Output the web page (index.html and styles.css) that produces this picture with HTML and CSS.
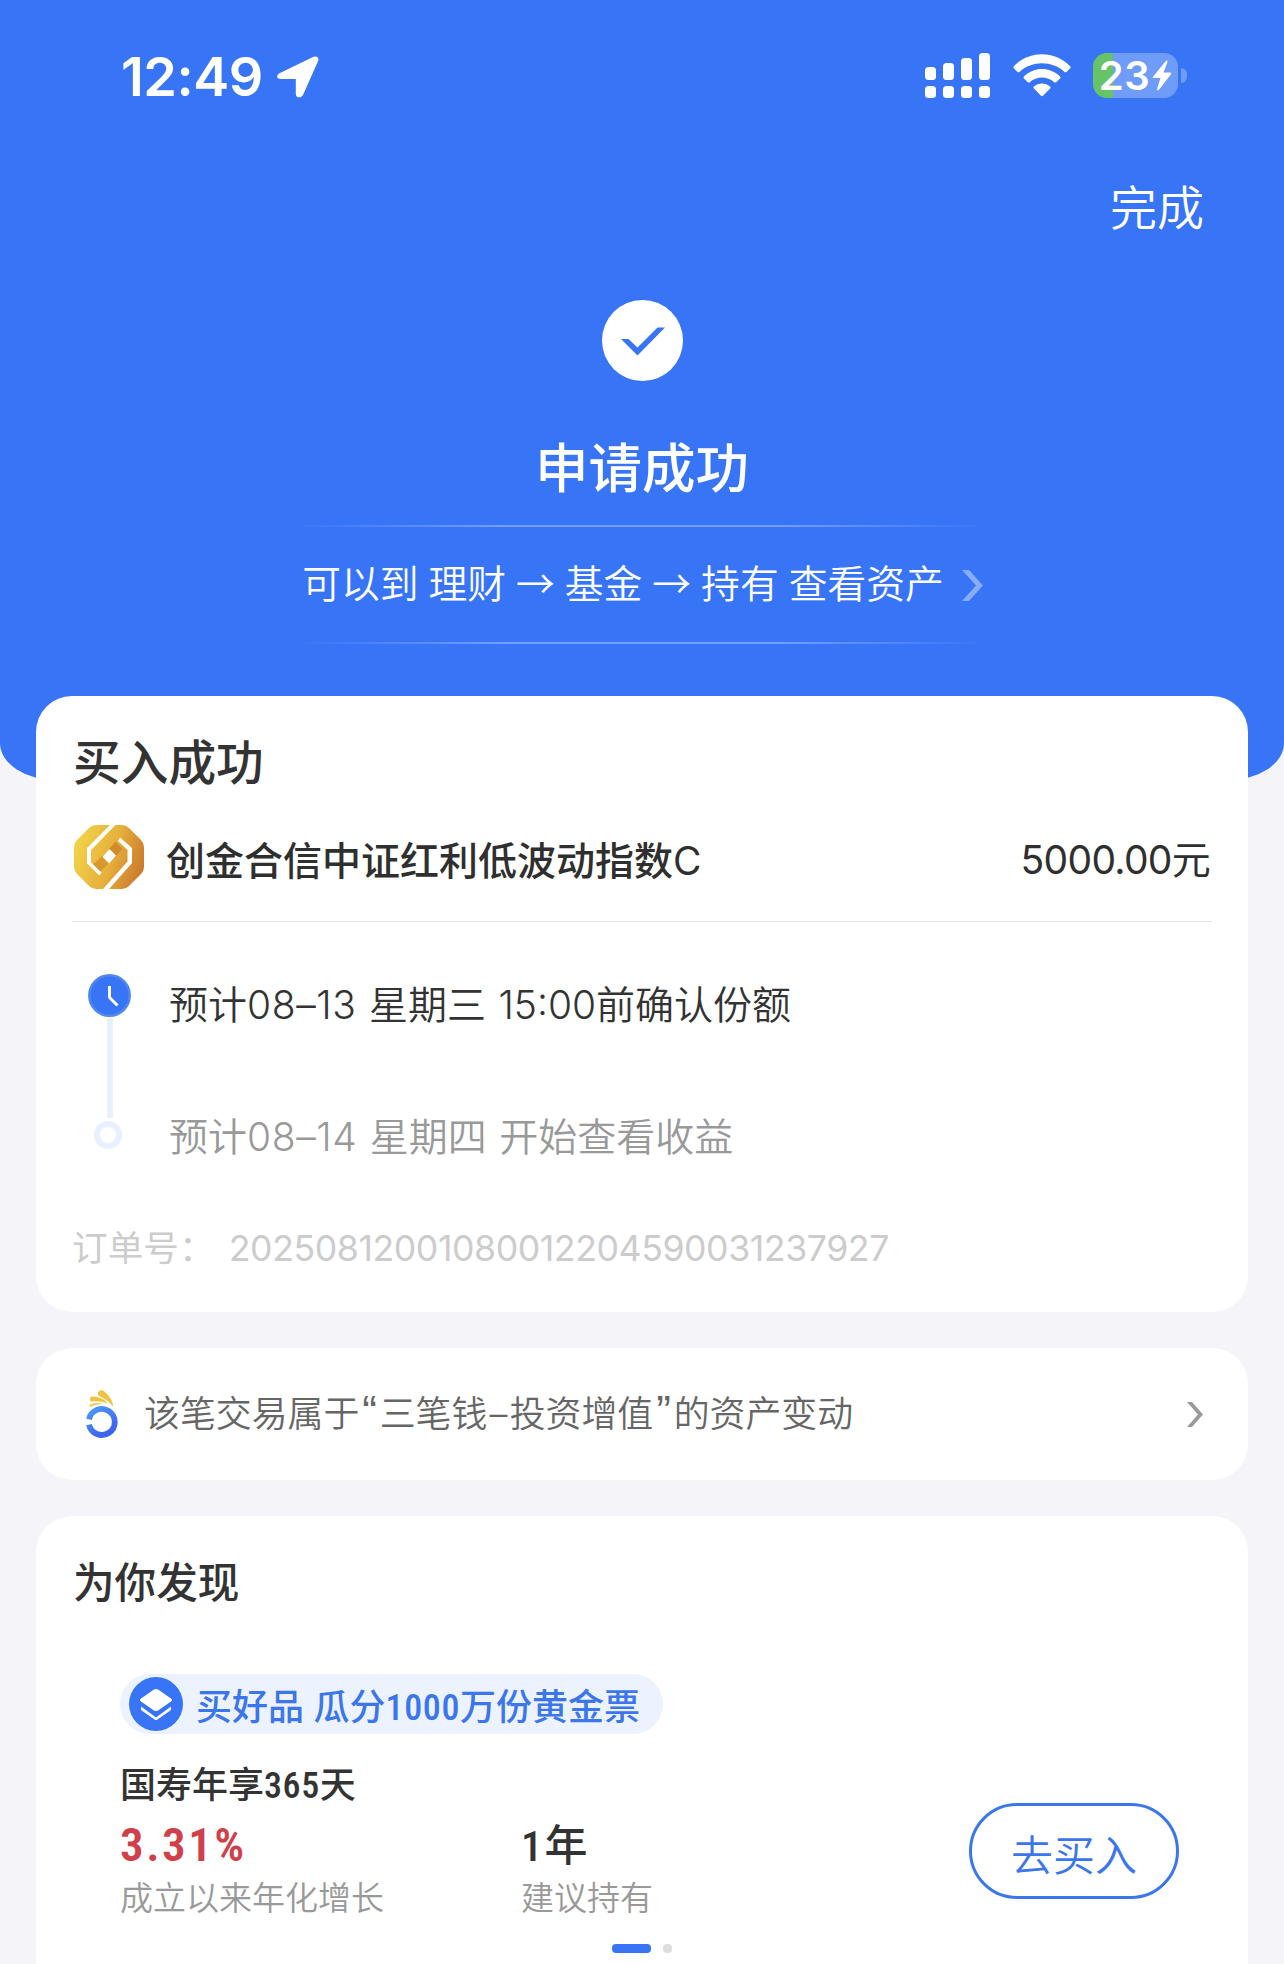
FILE: index.html
```html
<!DOCTYPE html>
<html lang="zh-CN">
<head>
    <meta charset="UTF-8">
    <meta name="viewport" content="width=device-width, initial-scale=1.0">
    <title>申请成功</title>
    <link rel="stylesheet" href="styles.css">
</head>
<body>
    <div class="header">
        <div class="status-bar">
            <div class="status-left">
                <span class="time">12:49</span>
                <svg class="location" width="42" height="42" viewBox="0 0 42 42">
                    <path d="M3 17 36 1C39.800-.8 42.500 2 41 5.300L26 39C24.200 42.500 18.800 42 18.800 38V23H4C-.8 23-1.200 19 3 17Z" fill="#fff"/>
                </svg>
            </div>
            <div class="status-right">
                <svg width="65" height="45" viewBox="0 0 65 45" fill="#fff">
                    <rect x="0" y="14" width="11" height="13" rx="3.500"/>
                    <rect x="18" y="10" width="11" height="17" rx="3.500"/>
                    <rect x="36" y="5" width="11" height="22" rx="3.500"/>
                    <rect x="54" y="0" width="11" height="27" rx="3.500"/>
                    <rect x="0" y="33" width="11" height="12" rx="3.500"/>
                    <rect x="18" y="33" width="11" height="12" rx="3.500"/>
                    <rect x="36" y="33" width="11" height="12" rx="3.500"/>
                    <rect x="54" y="33" width="11" height="12" rx="3.500"/>
                </svg>
                <svg class="wifi" width="58" height="43" viewBox="0 0 58 43" fill="#fff">
                    <path d="M.8 12.200C16-3.700 42-3.700 57.200 12.200Q58 13.200 57.200 14.200L53.500 17.900Q52.500 18.700 51.500 17.900C39 6.500 19 6.500 6.500 17.900Q5.500 18.700 4.500 17.900L.8 14.200Q0 13.200.8 12.200Z"/>
                    <path d="M10.900 22.400C21 12.400 37 12.400 47.100 22.400Q47.900 23.400 47.100 24.400L43.200 28.200Q42.200 29 41.200 28.200C34 22 24 22 16.800 28.200Q15.800 29 14.800 28.200L10.900 24.400Q10.100 23.400 10.900 22.400Z"/>
                    <path d="M20.900 32.600C25.500 28.500 32.500 28.500 37.100 32.600Q38 33.600 37.100 34.600L30 41.700Q29 42.600 28 41.700L20.900 34.600Q20 33.600 20.900 32.600Z"/>
                </svg>
                <div class="battery">
                    <span>23</span>
                    <svg width="20" height="31" viewBox="0 0 20 31">
                        <path d="M14 .8 1.200 16.500Q.2 18 2 18H8.500L5 29Q5 31 6.800 30L18.800 14.500Q20 12.600 18 12.600H11.500L15.500 2Q15.500-.2 14 .8Z" fill="#fff"/>
                    </svg>
                </div>
                <div class="battery-tip"></div>
            </div>
        </div>
        <div class="nav"><span>完成</span></div>
        <svg class="check" width="81" height="81" viewBox="0 0 81 81">
            <circle cx="40.500" cy="40.500" r="40.500" fill="#fff"/>
            <path d="M19 39H26.500L35.500 47.500 55.500 27.500H63L35.500 55.500Z" fill="#3875f6"/>
        </svg>
        <h1>申请成功</h1>
        <div class="path">
            <span>可以到 理财 → 基金 → 持有 查看资产</span>
            <svg width="21" height="31" viewBox="0 0 21 31">
                <path d="M0 0H7L21 15.500 7 31H0L14 15.500Z" fill="#fff" opacity=".4"/>
            </svg>
        </div>
    </div>

    <div class="content">
        <div class="card order">
            <h2>买入成功</h2>
            <div class="fund">
                <svg width="70" height="64" viewBox="0 0 70 64">
                    <defs>
                        <linearGradient id="gold" x1="0" y1="0.300" x2="1" y2="0.600">
                            <stop offset="0" stop-color="#f2d44a"/>
                            <stop offset="0.550" stop-color="#e6b03b"/>
                            <stop offset="1" stop-color="#cb7a2c"/>
                        </linearGradient>
                    </defs>
                    <path d="M22 0H48Q52 0 55 3L67 15Q70 18 70 22V42Q70 46 67 49L55 61Q52 64 48 64H22Q18 64 15 61L3 49Q0 46 0 42V22Q0 18 3 15L15 3Q18 0 22 0Z" fill="url(#gold)"/>
                    <path d="M41.500 16.500 48.500 24 42 31 35 24Z" fill="#cf8a2c"/>
                    <path d="M19 39.500 28 31 35 38 26 47Z" fill="#d8982e"/>
                    <path d="M35.500 24 42 30.500 35 38.500 28.500 32Z" fill="#fff"/>
                    <path d="M36 0H41.500L17 25V37.500L27.500 47.500 25.500 50.500 13 38.500V23ZM46 12.500 58 23V38L35 64H29L53.500 36.500V25L44 16Z" fill="#fff"/>
                </svg>
                <span class="fund-name">创金合信中证红利低波动指数<i>C</i></span>
                <span class="amount">5000.00元</span>
            </div>
            <div class="timeline">
                <div class="track">
                    <svg width="43" height="43" viewBox="0 0 43 43">
                        <circle cx="21.500" cy="21.500" r="20.200" fill="#3875f6" stroke="#5387ee" stroke-width="2.500"/>
                        <path d="M21.500 12V23.500L29.500 31.500" fill="none" stroke="#fff" stroke-width="3"/>
                    </svg>
                    <div class="track-line"></div>
                    <div class="track-dot"></div>
                </div>
                <div class="steps">
                    <p>预计<i>08–13</i> 星期三 <i>15:00</i>前确认份额</p>
                    <p class="pending">预计<i>08–14</i> 星期四 开始查看收益</p>
                </div>
            </div>
            <div class="order-no">
                <span>订单号：</span>
                <span class="number">20250812001080012204590031237927</span>
            </div>
        </div>

        <div class="card notice">
            <svg width="32" height="49" viewBox="0 0 32 49">
                <defs>
                    <linearGradient id="ring" x1="0" y1="0" x2="0.600" y2="1">
                        <stop offset="0" stop-color="#4b9bf8"/>
                        <stop offset="1" stop-color="#3f62ee"/>
                    </linearGradient>
                </defs>
                <path d="M3 29.300A13 13 0 1 1 3 34.600" fill="none" stroke="url(#ring)" stroke-width="5.800"/>
                <path d="M12.500 1.500Q16-1 19 2Q26 8 27.500 17Q22 10 13 6Q11 4 12.500 1.500Z" fill="#ecc444"/>
                <path d="M5 6.500Q16 6 22 13.500Q13 10.500 4.500 11.500Q3.500 8 5 6.500Z" fill="#ecc444"/>
                <path d="M3.500 15Q10 11.500 17.500 14Q9 14 4 17Z" fill="#ecc444"/>
            </svg>
            <p>该笔交易属于<i class="quote">“</i>三笔钱<i class="dash">–</i>投资增值<i class="quote">”</i>的资产变动</p>
            <svg class="arrow" width="16" height="25" viewBox="0 0 16 25">
                <path d="M0 0H5L16 12.500 5 25H0L11 12.500Z" fill="#999"/>
            </svg>
        </div>

        <div class="card discover">
            <h3>为你发现</h3>
            <div class="tag">
                <svg width="54" height="54" viewBox="0 0 54 54">
                    <circle cx="27" cy="27" r="27" fill="#3875f6"/>
                    <path d="M25 12.500Q27 11.300 29 12.500L42 21.500Q44 23 42 24.500L29 33.500Q27 34.700 25 33.500L12 24.500Q10 23 12 21.500Z" fill="#fff"/>
                    <path d="M12 29.500 27 40.500 42 29.500V33L28.500 42.500Q27 43.500 25.500 42.500L12 33Z" fill="#fff"/>
                </svg>
                <span>买好品 瓜分<i>1000</i>万份黄金票</span>
            </div>
            <div class="product">
                <div class="product-info">
                    <div class="product-name">国寿年享<i>365</i>天</div>
                    <div class="stats">
                        <div class="stat">
                            <div class="rate">3.31%</div>
                            <div class="label">成立以来年化增长</div>
                        </div>
                        <div class="stat">
                            <div class="period"><i>1</i>年</div>
                            <div class="label">建议持有</div>
                        </div>
                    </div>
                </div>
                <button class="buy">去买入</button>
            </div>
            <div class="dots">
                <span class="dot active"></span>
                <span class="dot"></span>
            </div>
        </div>
    </div>
</body>
</html>
```
FILE: styles.css
```css
* {
    box-sizing: border-box;
}
body {
    margin: 0;
    width: 1284px;
    height: 1964px;
    overflow: hidden;
    background: #f4f4f9;
    color: #333;
    font-family: Inter, "Noto Sans CJK SC", sans-serif;
    font-weight: 350;
}
h1, h2, h3, p {
    margin: 0;
    font-weight: 500;
}
i {
    font-style: normal;
}
svg {
    display: block;
    flex-shrink: 0;
}
.header {
    display: flex;
    flex-direction: column;
    align-items: center;
    height: 780px;
    background: #3875f6;
    border-radius: 0 0 56px 56px / 0 0 37px 37px;
    color: #fff;
}
.status-bar {
    display: flex;
    justify-content: space-between;
    align-items: center;
    width: 100%;
    height: 151px;
    padding: 0 97px 0 121px;
}
.status-left, .status-right {
    display: flex;
    align-items: center;
}
.time {
    padding-top: 2px;
    font-size: 54px;
    font-weight: 600;
    line-height: 64px;
    width: 156px;
    letter-spacing: -0.5px;
}
.location {
    margin-top: 3px;
}
.wifi {
    margin: 0 22px 0 23px;
}
.battery {
    display: flex;
    align-items: center;
    justify-content: center;
    gap: 2px;
    width: 85px;
    height: 45px;
    border-radius: 14px;
    background: linear-gradient(to right, #67c466 20px, #6f9cf9 20px);
    font-size: 40px;
    font-weight: 620;
    letter-spacing: 0.5px;
    line-height: 47px;
}
.battery-tip {
    width: 6px;
    height: 15px;
    margin-left: 3px;
    border-radius: 0 6px 6px 0;
    background: #6f9cf9;
}
.nav {
    display: flex;
    justify-content: flex-end;
    width: 100%;
    padding: 1px 80px 0;
    font-size: 47px;
    line-height: 112px;
}
.check {
    margin-top: 36px;
}
h1 {
    margin-top: 56px;
    font-size: 53.5px;
    line-height: 64px;
}
.path {
    display: flex;
    align-items: center;
    justify-content: center;
    gap: 18px;
    width: 686px;
    height: 119px;
    margin-top: 24px;
    font-family: "Noto Sans CJK SC", sans-serif;
    font-size: 38.8px;
    word-spacing: 1.3px;
    white-space: nowrap;
    background:
        linear-gradient(to right, transparent, rgba(255, 255, 255, 0.3) 30%, rgba(255, 255, 255, 0.3) 70%, transparent) top / 100% 2px no-repeat,
        linear-gradient(to right, transparent, rgba(255, 255, 255, 0.3) 30%, rgba(255, 255, 255, 0.3) 70%, transparent) bottom / 100% 2px no-repeat;
}
.path span {
    line-height: 50px;
    margin-top: -8px;
    padding-left: 1px;
}
.path svg {
    margin-top: 2px;
}
.content {
    display: flex;
    flex-direction: column;
    gap: 36px;
    margin-top: -84px;
    padding: 0 36px;
}
.card {
    border-radius: 36px;
    background: #fff;
}
.order {
    height: 616px;
    padding: 37px 36px 0;
}
h2 {
    padding-left: 1px;
    font-size: 47.7px;
    line-height: 60px;
}
.fund {
    display: flex;
    align-items: center;
    height: 129px;
    padding: 0 2px;
    border-bottom: 1px solid #e3e3e3;
    color: #2f2f2f;
    font-size: 39px;
}
.fund-name {
    margin-left: 22px;
    padding-top: 2px;
    font-weight: 500;
}
.fund-name i {
    font-weight: 400;
}
.amount {
    margin-left: auto;
    font-weight: 400;
    letter-spacing: -0.7px;
}
.timeline {
    display: flex;
    padding: 52px 0 0 16px;
    height: 240px;
}
.track {
    display: flex;
    flex-direction: column;
    align-items: center;
    width: 43px;
    margin-right: 38px;
}
.track-line {
    width: 6px;
    height: 100px;
    margin: 1px 0 3px;
    background: #e8effd;
}
.track-dot {
    width: 28px;
    height: 28px;
    margin-right: 3px;
    border: 6px solid #e8effd;
    border-radius: 50%;
}
.steps {
    margin-top: 6px;
    font-size: 39px;
    word-spacing: 1.5px;
}
.steps p {
    height: 132px;
    font-weight: 350;
    line-height: 50px;
    white-space: nowrap;
}
.steps .pending {
    color: #999;
}
.steps i {
    letter-spacing: 0.6px;
}
.steps i + i {
    letter-spacing: 0;
}
.order-no {
    display: flex;
    padding: 61px 0 0;
    color: #ccc;
    font-size: 35.7px;
    font-weight: 400;
    line-height: 50px;
}
.number {
    margin-left: 14px;
    letter-spacing: -0.45px;
}
.notice {
    display: flex;
    align-items: center;
    height: 132px;
    padding: 0 45px 0 50px;
    color: #666;
    font-size: 35.9px;
}
.notice p {
    margin-left: 26px;
    font-weight: 350;
    line-height: 50px;
}
.quote, .dash {
    display: inline-block;
    width: 20.4px;
    font-family: "Liberation Sans", sans-serif;
    font-size: 44px;
    line-height: 30px;
    text-align: center;
}
.dash {
    width: 22.3px;
    font-family: Inter, sans-serif;
    font-size: inherit;
}
.notice .arrow {
    margin-left: auto;
}
.discover {
    height: 500px;
    padding: 37px 69px 0 84px;
}
h3 {
    margin-left: -47px;
    font-size: 41.6px;
    line-height: 60px;
}
.tag {
    display: flex;
    align-items: center;
    width: 543px;
    height: 60px;
    margin-top: 61px;
    padding-left: 9px;
    border-radius: 30px;
    background: #edf3fe;
    color: #3c76ec;
    font-size: 36px;
    font-weight: 500;
    white-space: nowrap;
}
.tag span {
    margin-left: 13px;
}
.tag i, .product-name i, .period i, .rate {
    font-family: Roboto, sans-serif;
    font-stretch: 85%;
    letter-spacing: 0.6px;
}
.product {
    display: flex;
    justify-content: space-between;
}
.product-name {
    margin-top: 26px;
    font-size: 36px;
    font-weight: 500;
    line-height: 50px;
}
.stats {
    display: flex;
}
.stat {
    width: 401px;
}
.rate, .period {
    height: 64px;
    margin-top: 2px;
    font-size: 47px;
    font-weight: 600;
    line-height: 64px;
}
.rate {
    color: #d0404a;
    letter-spacing: 2.5px;
}
.period {
    font-size: 43px;
    font-weight: 500;
}
.period i {
    letter-spacing: 2px;
}
.label {
    color: #999;
    font-size: 33px;
    line-height: 42px;
}
.buy {
    width: 210px;
    height: 96px;
    margin-top: 69px;
    padding: 2px 0 0;
    border: 3px solid #3c76ec;
    border-radius: 48px;
    background: #fff;
    color: #3c76ec;
    font-family: inherit;
    font-size: 42px;
    font-weight: 350;
    flex-shrink: 0;
}
.dots {
    display: flex;
    justify-content: center;
    gap: 12px;
    margin: 25px 15px 0 0;
}
.dot {
    width: 9px;
    height: 9px;
    border-radius: 4px;
    background: #ddd;
}
.dot.active {
    width: 39px;
    background: #3875f6;
}
```
